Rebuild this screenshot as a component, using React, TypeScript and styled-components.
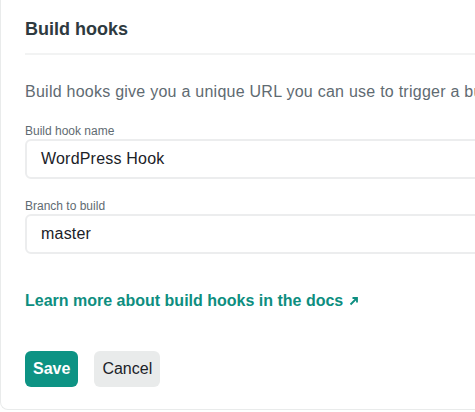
import React from 'react'
import styled, { createGlobalStyle } from 'styled-components'

const GlobalStyle = createGlobalStyle`
  html, body {
    margin: 0;
    padding: 0;
    background: #ffffff;
  }
  body {
    font-family: "Liberation Sans", Arial, sans-serif;
    -webkit-font-smoothing: antialiased;
  }
`

const Page = styled.div`
  width: 475px;
  height: 412px;
  overflow: hidden;
  background: #ffffff;
`

const Card = styled.div`
  width: 520px;
  height: 410px;
  box-sizing: border-box;
  border-left: 1px solid #e9ebeb;
  border-bottom: 1px solid #e9ebeb;
  border-bottom-left-radius: 8px;
  padding: 0 0 0 24px;
  display: flex;
  flex-direction: column;
`

const Header = styled.div`
  height: 55px;
  display: flex;
  align-items: center;
  border-bottom: 2px solid #f2f3f3;
  padding-top: 6px;
  box-sizing: border-box;
`

const Title = styled.h2`
  margin: 0;
  font-size: 18px;
  font-weight: 700;
  color: #2e3a40;
`

const Body = styled.div`
  display: flex;
  flex-direction: column;
  padding-top: 25px;
`

const Description = styled.p`
  margin: 0 0 19px;
  font-size: 16px;
  line-height: 24px;
  letter-spacing: 0.25px;
  color: #5f6b72;
  white-space: nowrap;
`

const Field = styled.div`
  display: flex;
  flex-direction: column;
  margin-bottom: 19px;
`

const Label = styled.label`
  font-size: 12px;
  font-weight: 500;
  line-height: 16px;
  color: #5f6b72;
`

const Input = styled.div`
  height: 40px;
  box-sizing: border-box;
  border: 2px solid #ecedee;
  border-radius: 6px;
  padding: 0 14px;
  display: flex;
  align-items: center;
  font-size: 16px;
  letter-spacing: 0.2px;
  color: #1b2228;
`

const DocsLink = styled.a`
  margin-top: 19px;
  font-size: 16px;
  font-weight: 700;
  color: #0d8e80;
  text-decoration: none;
  display: inline-flex;
  align-items: center;
  gap: 6px;
`

const Actions = styled.div`
  display: flex;
  gap: 16px;
  margin-top: 41px;
`

const Button = styled.button<{ $primary?: boolean }>`
  height: 36px;
  box-sizing: border-box;
  border: none;
  border-radius: 6px;
  padding: 0 8px;
  font-family: inherit;
  font-size: 16px;
  font-weight: ${p => (p.$primary ? 700 : 400)};
  background: ${p => (p.$primary ? '#0d9384' : '#e9ebeb')};
  color: ${p => (p.$primary ? '#ffffff' : '#1b2228')};
`

const ArrowIcon = () => (
  <svg width="10" height="10" viewBox="0 0 10 10" fill="none">
    <path d="M1.5 8.5 L8 2 M3.5 2 H8 V6.5" stroke="currentColor" strokeWidth="1.8" />
  </svg>
)

const App = () => {
  return (
    <Page>
      <GlobalStyle />
      <Card>
        <Header>
          <Title>Build hooks</Title>
        </Header>
        <Body>
          <Description>
            Build hooks give you a unique URL you can use to trigger a build.
          </Description>
          <Field>
            <Label>Build hook name</Label>
            <Input>WordPress Hook</Input>
          </Field>
          <Field>
            <Label>Branch to build</Label>
            <Input>master</Input>
          </Field>
          <div>
            <DocsLink href="#">
              Learn more about build hooks in the docs <ArrowIcon />
            </DocsLink>
          </div>
          <Actions>
            <Button $primary>Save</Button>
            <Button>Cancel</Button>
          </Actions>
        </Body>
      </Card>
    </Page>
  )
}

export default App
